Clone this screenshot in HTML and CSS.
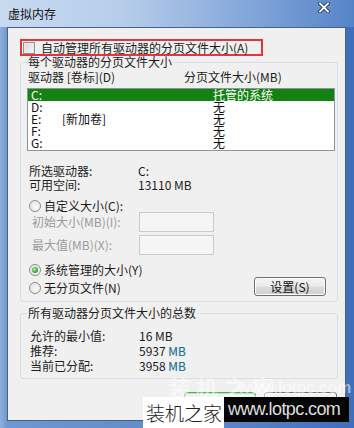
FILE: index.html
```html
<!DOCTYPE html>
<html lang="zh-CN">
<head>
<meta charset="utf-8">
<title>虚拟内存</title>
<link rel="stylesheet" href="styles.css">
</head>
<body>
<div class="window">
  <div class="titlebar">
    <span class="title">虚拟内存</span>
    <svg class="close" width="12" height="11" viewBox="0 0 12 11">
      <path d="M2 1.5L10 9.5M10 1.5L2 9.5" stroke="#22395c" stroke-width="3.6" stroke-linecap="square" fill="none"/>
      <path d="M2 1.5L10 9.5M10 1.5L2 9.5" stroke="#ffffff" stroke-width="1.8" stroke-linecap="square" fill="none"/>
    </svg>
  </div>
  <div class="client">
    <div class="auto">
      <span class="checkbox"></span>
      <span class="auto-text">自动管理所有驱动器的分页文件大小(A)</span>
    </div>

    <fieldset class="group g1">
      <legend>每个驱动器的分页文件大小</legend>
      <div class="cols">
        <span class="col-a">驱动器 [卷标](D)</span>
        <span class="col-b">分页文件大小(MB)</span>
      </div>
      <div class="list">
        <div class="row sel"><span class="drv">C:</span><span class="vol"></span><span class="size">托管的系统</span></div>
        <div class="row"><span class="drv">D:</span><span class="vol"></span><span class="size">无</span></div>
        <div class="row"><span class="drv">E:</span><span class="vol">[新加卷]</span><span class="size">无</span></div>
        <div class="row"><span class="drv">F:</span><span class="vol"></span><span class="size">无</span></div>
        <div class="row"><span class="drv">G:</span><span class="vol"></span><span class="size">无</span></div>
      </div>
      <div class="info">
        <div class="info-row"><span class="info-label">所选驱动器:</span><span>C:</span></div>
        <div class="info-row"><span class="info-label">可用空间:</span><span>13110 MB</span></div>
      </div>
      <div class="opt opt-custom"><span class="radio"></span><span class="opt-text">自定义大小(C):</span></div>
      <div class="field f-first"><span class="field-label">初始大小(MB)(I):</span><span class="input"></span></div>
      <div class="field f-second"><span class="field-label">最大值(MB)(X):</span><span class="input"></span></div>
      <div class="opt opt-system"><span class="radio on"><span class="dot"></span></span><span class="opt-text">系统管理的大小(Y)</span></div>
      <div class="opt-last">
        <div class="opt"><span class="radio"></span><span class="opt-text">无分页文件(N)</span></div>
        <span class="btn btn-set">设置(S)</span>
      </div>
    </fieldset>

    <fieldset class="group g2">
      <legend>所有驱动器分页文件大小的总数</legend>
      <div class="totals">
        <div class="tot-row"><span class="tot-label">允许的最小值:</span><span>16 MB</span></div>
        <div class="tot-row"><span class="tot-label">推荐:</span><span>5937 <span class="hl">MB</span></span></div>
        <div class="tot-row"><span class="tot-label">当前已分配:</span><span>3958 <span class="hl">MB</span></span></div>
      </div>
    </fieldset>

    <div class="buttons">
      <span class="btn btn-ok"></span>
      <span class="btn btn-cancel"></span>
    </div>
  </div>

  <div class="ghost ghost-cn">装机之家</div>
  <div class="ghost ghost-en">www.lotpc.com</div>
  <div class="wm-white">装机之家</div>
  <div class="wm-black">www.lotpc.com</div>
</div>
</body>
</html>
```
FILE: styles.css
```css
* { box-sizing: border-box; }
html, body { margin: 0; padding: 0; }
body {
  width: 354px;
  height: 428px;
  overflow: hidden;
  font-family: "Noto Sans CJK SC", "Noto Sans", sans-serif;
  font-size: 12px;
  color: #1c1c1c;
  background: #fff;
}

.window {
  position: relative;
  width: 354px;
  height: 428px;
  overflow: hidden;
  padding: 0 8px 7px 7px;
  display: flex;
  flex-direction: column;
  background: linear-gradient(90deg, #8fb0de 0px, #6f97d0 7px, #5d88c8 60%, #3f6fb8 100%);
}

.titlebar {
  height: 27px;
  margin: 0 -8px 0 -7px;
  padding: 0 0 0 8px;
  display: flex;
  align-items: center;
  justify-content: space-between;
  background: linear-gradient(90deg, #c8daf0 0%, #b6cdeb 35%, #86a9da 68%, #5484c8 100%);
}
.title {
  line-height: 12px;
  color: #111;
}
.close {
  align-self: flex-start;
  margin: 2px 24px 0 0;
}

.client {
  flex: 1;
  border: 1px solid #45628d;
  background: #f0f0f0;
  padding-top: 11px;
  display: flex;
  flex-direction: column;
}

.auto {
  margin-left: 12px;
  width: 243px;
  height: 17px;
  border: 2px solid #e3353a;
  display: flex;
  align-items: center;
}
.checkbox {
  width: 12px;
  height: 12px;
  margin-left: 1px;
  border: 1px solid #929292;
  background: linear-gradient(135deg, #d6d6d6, #f8f8f8);
  box-shadow: inset 0 0 0 1px #eaeaea;
}
.auto-text {
  margin-left: 6px;
  line-height: 12px;
}

.group {
  margin: 0 7px 0 12px;
  padding: 0 2px 5px 6px;
  border: 1px solid #d5dfe5;
  border-radius: 3px;
  min-width: 0;
}
.group legend {
  padding: 0 1px;
  line-height: 12px;
}

.cols {
  margin-top: 3px;
  display: flex;
  line-height: 12px;
  padding-left: 1px;
}
.col-a { width: 156px; }

.list {
  margin-top: 5px;
  width: 308px;
  height: 63px;
  border: 1px solid #8e949c;
  background: #fff;
}
.row {
  height: 12px;
  line-height: 12px;
  display: flex;
  padding-left: 3px;
  color: #111;
}
.row.sel {
  background: #138213;
  color: #fff;
}
.drv { width: 31px; }
.vol { width: 151px; }

.info { margin-top: 13px; }
.info-row {
  display: flex;
  line-height: 14px;
  padding-left: 2px;
}
.info-label { width: 109px; }

.opt {
  display: flex;
  align-items: center;
  padding-left: 2px;
}
.opt-custom {
  margin-top: 8px;
  height: 12px;
}
.opt-system {
  margin-top: 8px;
  height: 14px;
}
.radio {
  width: 12px;
  height: 12px;
  border-radius: 50%;
  border: 1px solid #8d8d8d;
  background: radial-gradient(circle at 60% 60%, #fbfbfb 0%, #dcdcdc 100%);
  display: flex;
  align-items: center;
  justify-content: center;
}
.dot {
  width: 6px;
  height: 6px;
  border-radius: 50%;
  background: radial-gradient(circle at 40% 40%, #b6f0a8 0%, #3aa33a 60%, #1b7a1b 100%);
}
.opt-text {
  margin-left: 3px;
  line-height: 12px;
}

.field {
  display: flex;
  align-items: center;
  height: 20px;
}
.f-second { margin-top: 3px; }
.field-label {
  width: 112px;
  padding-left: 5px;
  color: #9a9a9a;
  line-height: 12px;
}
.input {
  width: 75px;
  height: 20px;
  border: 1px solid #cbcbcb;
  background: #f5f5f5;
}

.opt-last {
  height: 19px;
  display: flex;
  align-items: center;
  justify-content: space-between;
}
.opt-last .opt { padding-top: 3px; }

.btn {
  display: flex;
  align-items: center;
  justify-content: center;
  border: 1px solid #707070;
  border-radius: 3px;
  background: linear-gradient(180deg, #f4f4f4 0%, #ebebeb 48%, #dcdcdc 52%, #cfcfcf 100%);
  box-shadow: inset 0 0 0 1px #fcfcfc;
  line-height: 12px;
  color: #111;
}
.btn-set {
  width: 72px;
  height: 19px;
  margin-right: 9px;
}

.g2 { margin-top: 5px; }
.totals { margin-top: 9px; }
.tot-row {
  display: flex;
  line-height: 15px;
  padding-left: 3px;
}
.tot-label { width: 109px; }
.hl {
  color: #2a6a86;
  text-shadow: 0 0 1px #a9dcea;
}

.buttons {
  margin-top: 13px;
  display: flex;
  justify-content: flex-end;
  gap: 8px;
  padding-right: 8px;
}
.btn-ok {
  width: 72px;
  height: 23px;
  border-color: #5aa65a;
  box-shadow: inset 0 0 0 1px #b9e6b2;
}
.btn-cancel {
  width: 73px;
  height: 23px;
}

.ghost {
  position: absolute;
  font-weight: bold;
  color: rgba(255, 255, 255, 0.5);
  white-space: nowrap;
}
.ghost-cn {
  left: 168px;
  top: 373px;
  font-size: 22px;
  line-height: 26px;
  letter-spacing: 6px;
}
.ghost-en {
  left: 238px;
  top: 378px;
  font-family: "Liberation Sans", sans-serif;
  font-size: 16px;
  line-height: 20px;
  letter-spacing: -0.3px;
}

.wm-white {
  position: absolute;
  left: 143px;
  top: 397px;
  width: 81px;
  height: 31px;
  background: #fff;
  color: #222;
  font-size: 19px;
  font-weight: 300;
  line-height: 31px;
  padding-left: 3px;
  white-space: nowrap;
}
.wm-black {
  position: absolute;
  left: 224px;
  top: 397px;
  width: 125px;
  height: 25px;
  background: #050505;
  color: #dedede;
  font-family: "Liberation Sans", sans-serif;
  font-size: 18px;
  line-height: 25px;
  letter-spacing: -0.6px;
  padding-left: 4px;
  white-space: nowrap;
}
```
